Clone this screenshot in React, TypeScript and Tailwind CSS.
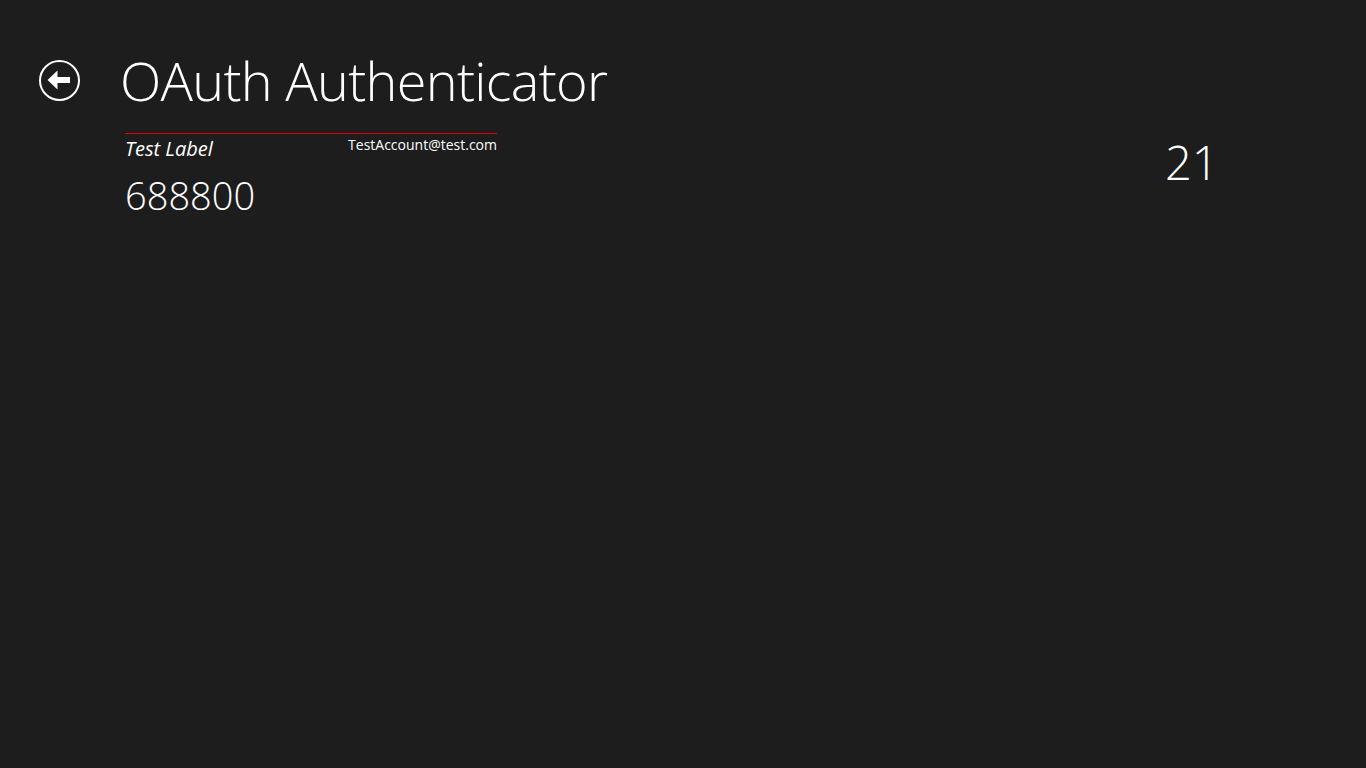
function BackButton() {
  return (
    <button className="flex h-[41px] w-[41px] items-center justify-center rounded-full border-2 border-white text-white">
      <svg width="26" height="24" viewBox="0 0 26 24" className="ml-[-1px]">
        <path d="M1.5 12 L11.5 2.5 L11.5 9 L24 9 L24 15 L11.5 15 L11.5 21.5 Z" fill="white" />
      </svg>
    </button>
  )
}

export default function App() {
  return (
    <div
      className="min-h-[768px] w-full bg-[#1d1d1d] text-white"
      style={{ fontFamily: '"Open Sans", "Noto Sans", sans-serif' }}
    >
      {/* Header */}
      <div className="flex items-center pl-[39px] pt-[52px]">
        <BackButton />
        <h1 className="ml-[40px] text-[54px] font-light leading-[56px] tracking-[-0.7px]">
          OAuth Authenticator
        </h1>
      </div>

      {/* Account list + countdown */}
      <div className="mt-[25px] flex pl-[125px]">
        <div className="w-[372px] border-t border-[#e00000]">
          <div className="flex items-start justify-between">
            <span className="mt-[2px] text-[20px] italic leading-[26px]">Test Label</span>
            <span className="mt-[1px] text-[14px] leading-[20px]">TestAccount@test.com</span>
          </div>
          <div className="mt-[10px] text-[38px] font-light leading-[46px]">688800</div>
        </div>
        <div className="ml-[668px] mt-[-1px] text-[47px] font-light leading-[60px]">21</div>
      </div>
    </div>
  )
}
